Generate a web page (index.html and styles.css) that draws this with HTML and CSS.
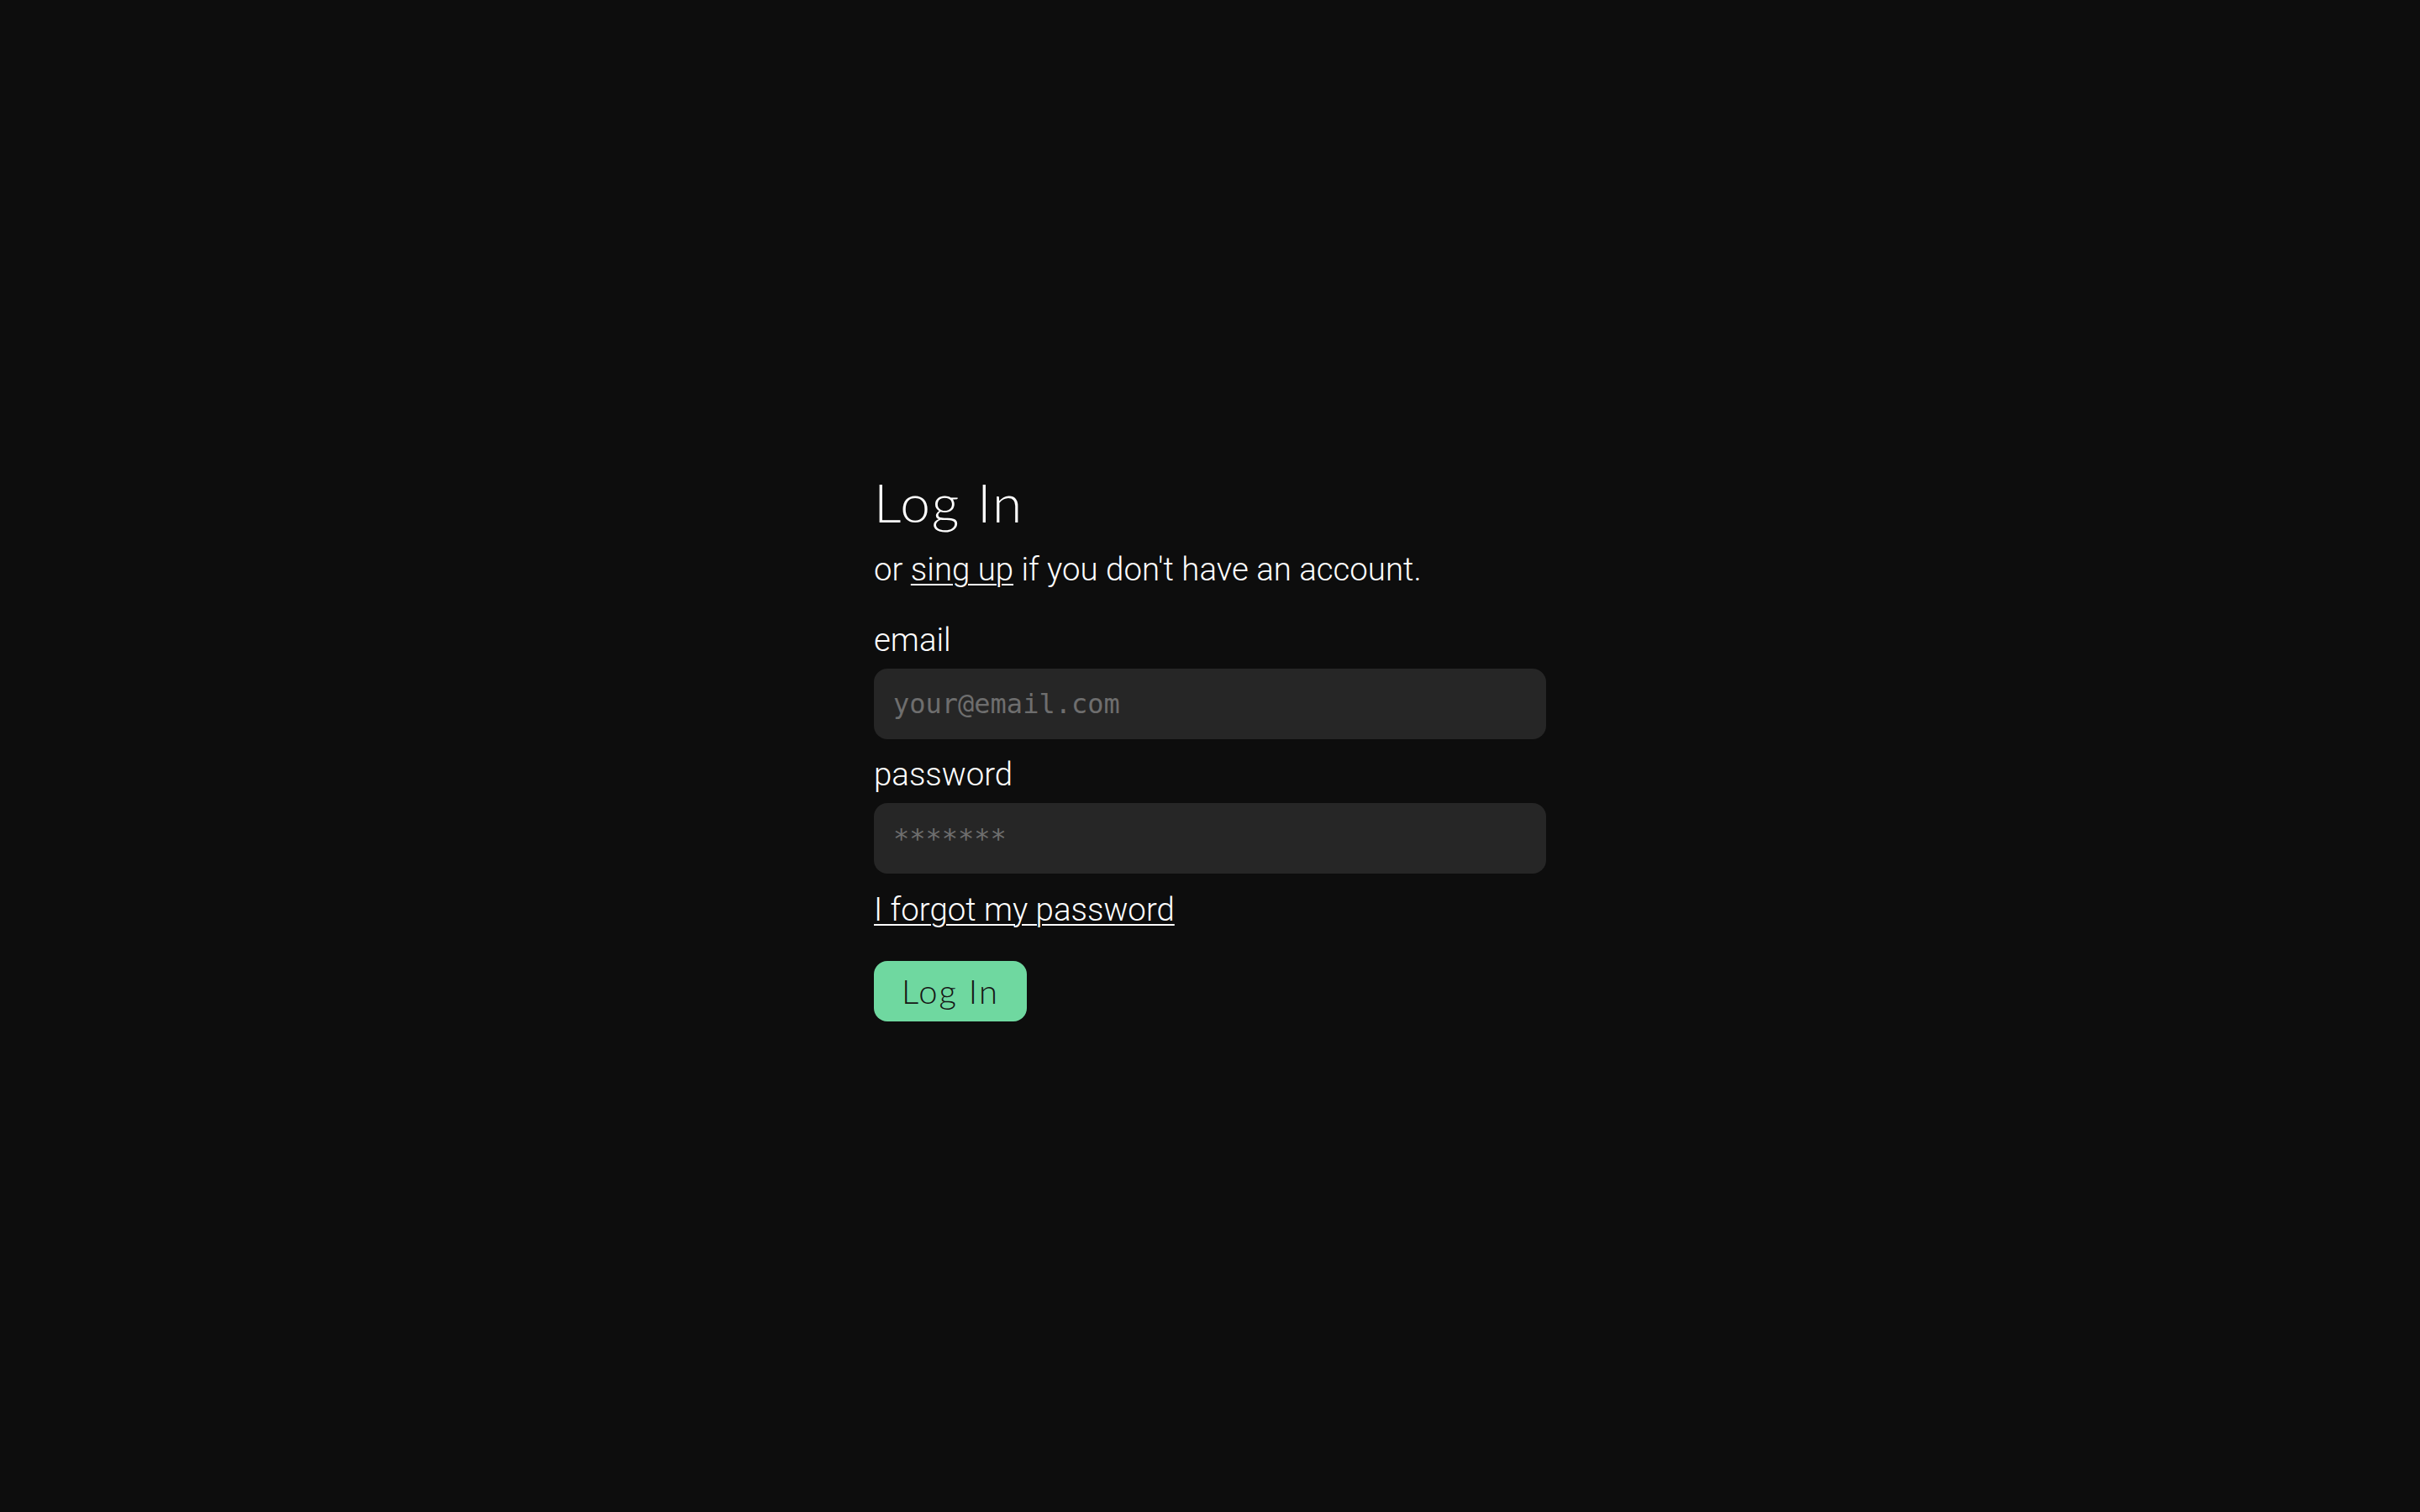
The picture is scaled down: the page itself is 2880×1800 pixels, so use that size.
FILE: index.html
```html
<!DOCTYPE html>
<html lang="en">
<head>
<meta charset="utf-8">
<title>Log In</title>
<link rel="stylesheet" href="styles.css">
</head>
<body>
<main class="page">
  <form class="login">
    <h1 class="title">Log In</h1>
    <p class="subtitle">or <a href="#" class="link">sing up</a> if you don't have an account.</p>
    <label class="label" for="email">email</label>
    <input class="field" id="email" type="email" placeholder="your@email.com">
    <label class="label label-pw" for="password">password</label>
    <input class="field" id="password" type="password" placeholder="*******">
    <a href="#" class="link forgot">I forgot my password</a>
    <button type="button" class="btn">Log In</button>
  </form>
</main>
</body>
</html>
```

FILE: styles.css
```css
html, body {
  margin: 0;
  padding: 0;
  background: #0d0d0d;
}
body {
  font-family: Roboto, "Liberation Sans", sans-serif;
  font-weight: 300;
  color: #ffffff;
}
.page {
  min-height: 1800px;
  padding-top: 560px;
  box-sizing: border-box;
}
.login {
  width: 800px;
  margin: 0 auto;
  display: flex;
  flex-direction: column;
  align-items: flex-start;
}
.title {
  margin: 0;
  font-family: Lato, "Open Sans", sans-serif;
  font-weight: 300;
  font-size: 64px;
  line-height: 76px;
  letter-spacing: 2px;
}
.subtitle {
  margin: 15px 0 0;
  font-size: 38.4px;
  line-height: 54px;
}
.link {
  color: #ffffff;
  text-decoration: underline;
  text-decoration-thickness: 2px;
  text-underline-offset: 4px;
}
.label {
  display: block;
  margin-top: 30px;
  margin-bottom: 7px;
  font-size: 38.4px;
  line-height: 54px;
}
.label-pw {
  margin-top: 15px;
}
.field {
  width: 800px;
  height: 84px;
  box-sizing: border-box;
  border: none;
  outline: none;
  border-radius: 16px;
  background: #262626;
  padding: 0 23px;
  font-family: "DejaVu Sans Mono", "Liberation Mono", monospace;
  font-size: 32px;
  color: #dddddd;
}
.field::placeholder {
  color: #6e6e6e;
}
.forgot {
  margin-top: 16px;
  font-size: 38.4px;
  line-height: 54px;
}
.btn {
  margin-top: 34px;
  height: 72px;
  padding: 0 33px;
  border: none;
  border-radius: 16px;
  background: #6fd8a0;
  color: #151515;
  font-family: Lato, "Open Sans", sans-serif;
  font-weight: 300;
  font-size: 40px;
  letter-spacing: 2px;
  cursor: pointer;
}
```
